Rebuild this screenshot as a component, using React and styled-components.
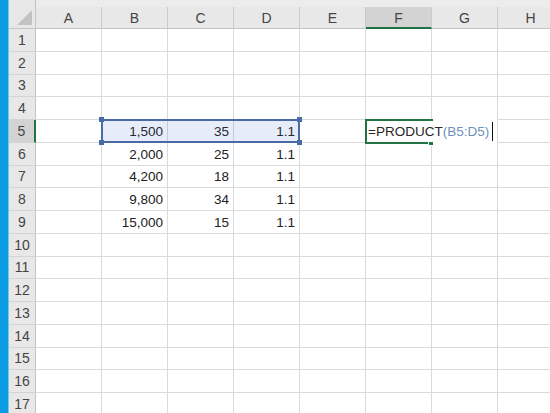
import React from "react";
import styled, { createGlobalStyle } from "styled-components";

const GlobalStyle = createGlobalStyle`
  html, body {
    margin: 0;
    padding: 0;
    background: #ffffff;
    overflow: hidden;
  }
  * {
    box-sizing: border-box;
  }
`;

const Frame = styled.div`
  display: flex;
  width: 550px;
  height: 413px;
  overflow: hidden;
  font-family: "Liberation Sans", Arial, sans-serif;
`;

const BlueBar = styled.div`
  flex: 0 0 9px;
  background: #0b9be3;
  border-right: 1px solid #7cc6ee;
`;

const Sheet = styled.div`
  display: grid;
  grid-template-columns: 27px repeat(8, 66px);
  grid-template-rows: 7px 22px repeat(17, 22.75px);
  background: #ffffff;
`;

const TopStrip = styled.div`
  grid-column: 2 / -1;
  grid-row: 1;
  background: #ececec;
`;

const Corner = styled.div`
  grid-column: 1;
  grid-row: 1 / 3;
  background: #e8e8e8;
  border-right: 1px solid #c4c4c4;
  border-bottom: 1px solid #c4c4c4;
  display: flex;
  align-items: flex-end;
  justify-content: flex-end;
  padding: 0 3px 3px 0;
`;

const ColHeader = styled.div`
  grid-row: 2;
  grid-column: ${(p) => p.$col};
  display: flex;
  align-items: center;
  justify-content: center;
  background: ${(p) => (p.$active ? "#d3d3d3" : "#e8e8e8")};
  border-right: 1px solid #cbcbcb;
  border-bottom: ${(p) => (p.$active ? "2px solid #217346" : "1px solid #c4c4c4")};
  color: #444444;
  font-size: 14px;
  padding-top: 1px;
`;

const RowHeader = styled.div`
  grid-row: ${(p) => p.$row};
  grid-column: 1;
  display: flex;
  align-items: center;
  justify-content: center;
  background: ${(p) => (p.$active ? "#d3d3d3" : "#e8e8e8")};
  border-right: ${(p) => (p.$active ? "2px solid #217346" : "1px solid #c4c4c4")};
  border-bottom: 1px solid #d4d4d4;
  color: #444444;
  font-size: 14px;
`;

const Cell = styled.div`
  grid-row: ${(p) => p.$row};
  grid-column: ${(p) => p.$col};
  display: flex;
  align-items: center;
  justify-content: flex-end;
  padding: 1px 4px 0 0;
  border-right: 1px solid #dadada;
  border-bottom: 1px solid #dadada;
  color: #222222;
  font-size: 13.5px;
  white-space: nowrap;
`;

const Selection = styled.div`
  grid-column: 3 / 6;
  grid-row: 7;
  position: relative;
  margin: -1px 0 0 -1px;
  border: 2px solid #4a6aa6;
  background: rgba(60, 110, 200, 0.12);
  z-index: 2;
`;

const Knob = styled.span`
  position: absolute;
  width: 5px;
  height: 5px;
  background: #4a6aa6;
  left: ${(p) => (p.$right ? "auto" : "-4px")};
  right: ${(p) => (p.$right ? "-4px" : "auto")};
  top: ${(p) => (p.$bottom ? "auto" : "-4px")};
  bottom: ${(p) => (p.$bottom ? "-4px" : "auto")};
`;

const Editor = styled.div`
  grid-column: 7 / 9;
  grid-row: 7;
  position: relative;
  margin: -1px 1px 0 -1px;
  background: #ffffff;
  display: flex;
  align-items: center;
  padding: 1px 0 0 3px;
  font-size: 13.5px;
  color: #262626;
  white-space: nowrap;
  z-index: 3;
`;

const ActiveFrame = styled.span`
  position: absolute;
  left: 0;
  top: 0;
  width: 68px;
  height: calc(100% + 1px);
  border: 2px solid #217346;
  border-right: none;
  pointer-events: none;
`;

const FillHandle = styled.span`
  position: absolute;
  left: 63px;
  bottom: -3px;
  width: 6px;
  height: 5px;
  background: #217346;
  border: 1px solid #ffffff;
`;

const RefText = styled.span`
  color: #6f8fbd;
`;

const Caret = styled.span`
  display: inline-block;
  width: 1px;
  height: 19px;
  margin-left: 3px;
  background: #111111;
`;

const cols = ["A", "B", "C", "D", "E", "F", "G", "H"];

const data = {
  5: ["1,500", "35", "1.1"],
  6: ["2,000", "25", "1.1"],
  7: ["4,200", "18", "1.1"],
  8: ["9,800", "34", "1.1"],
  9: ["15,000", "15", "1.1"],
};

const rows = Array.from({ length: 17 }, (_, i) => i + 1);

function App() {
  return (
    <>
      <GlobalStyle />
      <Frame>
        <BlueBar />
        <Sheet>
          <Corner>
            <svg width="15" height="15" viewBox="0 0 15 15">
              <polygon points="15,0 15,15 0,15" fill="#c3c3c3" />
            </svg>
          </Corner>
          <TopStrip />
          {cols.map((c, ci) => (
            <ColHeader key={c} $col={ci + 2} $active={c === "F"}>
              {c}
            </ColHeader>
          ))}
          {rows.map((r) => (
            <React.Fragment key={r}>
              <RowHeader $row={r + 2} $active={r === 5}>
                {r}
              </RowHeader>
              {cols.map((c, ci) => (
                <Cell key={c} $row={r + 2} $col={ci + 2}>
                  {data[r] && ci >= 1 && ci <= 3 ? data[r][ci - 1] : ""}
                </Cell>
              ))}
            </React.Fragment>
          ))}
          <Selection>
            <Knob />
            <Knob $right />
            <Knob $bottom />
            <Knob $right $bottom />
          </Selection>
          <Editor>
            <ActiveFrame />
            <FillHandle />
            =PRODUCT<RefText>(B5:D5)</RefText>
            <Caret />
          </Editor>
        </Sheet>
      </Frame>
    </>
  );
}

export default App;
